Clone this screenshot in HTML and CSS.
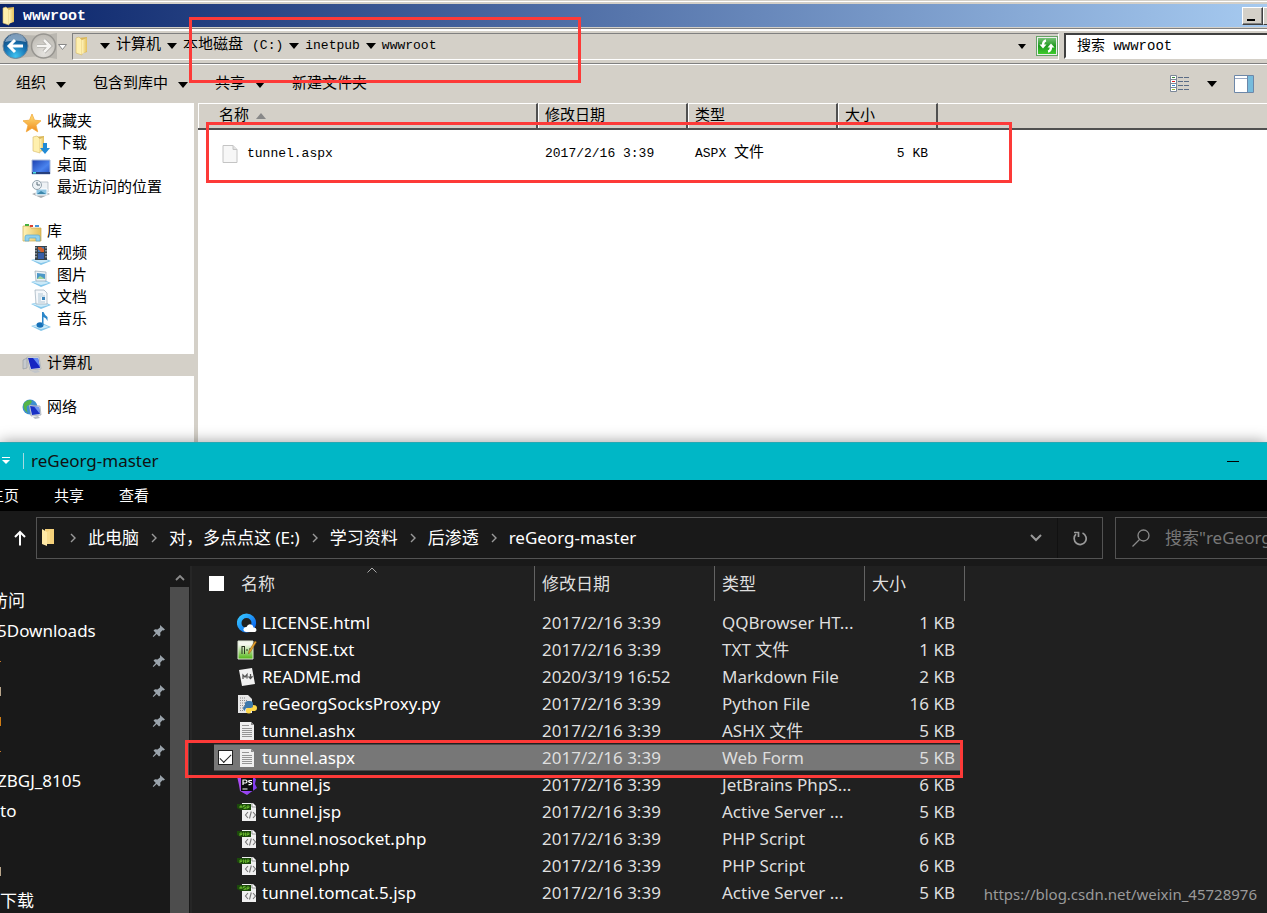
FILE: index.html
```html
<!DOCTYPE html>
<html lang="zh-CN">
<head>
<meta charset="utf-8">
<title>reGeorg-master</title>
<link rel="stylesheet" href="styles.css">
</head>
<body>
<svg class="defs" aria-hidden="true">
  <defs>
    <linearGradient id="gFold" x1="0" x2="1"><stop offset="0" stop-color="#fff3b8"/><stop offset="1" stop-color="#e3bf5a"/></linearGradient>
    <linearGradient id="gBlue" x1="0" y1="0" x2="1" y2="1"><stop offset="0" stop-color="#1b3fae"/><stop offset=".6" stop-color="#4a83ee"/><stop offset="1" stop-color="#2450c0"/></linearGradient>
    <linearGradient id="gStar" x1="0" y1="0" x2="0" y2="1"><stop offset="0" stop-color="#ffe27a"/><stop offset="1" stop-color="#f08a1d"/></linearGradient>
    <linearGradient id="gGreen" x1="0" y1="0" x2="0" y2="1"><stop offset="0" stop-color="#7cc47c"/><stop offset=".5" stop-color="#1f9a1f"/><stop offset="1" stop-color="#3fce2d"/></linearGradient>
    <linearGradient id="gTxt" x1="0" y1="0" x2="0" y2="1"><stop offset=".2" stop-color="#f4f7ee"/><stop offset="1" stop-color="#4fb511"/></linearGradient>
    <linearGradient id="gQQ" x1="0" y1="0" x2="1" y2="1"><stop offset="0" stop-color="#35c4ff"/><stop offset="1" stop-color="#0a62f0"/></linearGradient>
    <linearGradient id="gPS" x1="0" x2="1"><stop offset="0" stop-color="#b14cf5"/><stop offset="1" stop-color="#7b3bf0"/></linearGradient>
    <radialGradient id="gBack" cx=".5" cy=".9" r=".9"><stop offset="0" stop-color="#3fc3f0"/><stop offset=".5" stop-color="#1874b4"/><stop offset="1" stop-color="#123c6c"/></radialGradient>
    <radialGradient id="gFwd" cx=".5" cy=".8" r=".8"><stop offset="0" stop-color="#e4e2de"/><stop offset="1" stop-color="#bcb9b2"/></radialGradient>
    <symbol id="folder" viewBox="0 0 20 20"><path d="M5 2l9-1v15l-7 2z" fill="#d9b65a"/><path d="M3 2l3-1 3 3v15l-6-2z" fill="#fff0ae" stroke="#d5b765" stroke-width=".6"/><path d="M9 4l5-2v13l-5 3z" fill="url(#gFold)"/></symbol>
    <symbol id="down" viewBox="0 0 20 20"><path d="M3 2l10-1v15l-8 1z" fill="#d9b65a"/><path d="M2 2l4-1 3 3v14l-7-2z" fill="#fff0ae" stroke="#d5b765" stroke-width=".6"/><path d="M9 4l4-2v12l-4 2z" fill="url(#gFold)"/><path d="M12 8h4v5h3l-5 6-5-6h3z" fill="#218bd6"/></symbol>
    <symbol id="star" viewBox="0 0 20 20"><path d="M10 1l2.500 6.200 6.500.6-5 4.400 1.700 6.600L10 15.200 4.300 18.800 6 12.200 1 7.800l6.500-.6z" fill="url(#gStar)" stroke="#f2aa3c" stroke-width=".8"/></symbol>
    <symbol id="desk" viewBox="0 0 20 20"><path d="M1 3h18v14H1z" fill="url(#gBlue)" stroke="#a9b9d8"/><path d="M1 15h18v2H1z" fill="#27407c"/><path d="M2 15h3v1.500H2z" fill="#4fe0e0"/></symbol>
    <symbol id="recent" viewBox="0 0 20 20"><path d="M1 15l10-4 8 4-9 4z" fill="#a8adb2"/><path d="M8 3h9v10H8z" fill="#eef2f5" stroke="#a6b2bb" stroke-width=".7"/><path d="M5 10h11v6H5z" fill="#8dc5e4" stroke="#fff"/><path d="M6 15l4-3 5 3z" fill="#3b86aa"/><circle cx="6" cy="6" r="4.500" fill="#edf2f5" stroke="#94a3ad"/><path d="M6 3v3h3" fill="none" stroke="#5a6e7a"/></symbol>
    <symbol id="lib" viewBox="0 0 20 20"><path d="M1 3h7l1 2h10v13H1z" fill="url(#gFold)" stroke="#c9a94e" stroke-width=".7"/><path d="M3 1h4v2H3z" fill="#45b03f"/><path d="M8 2h3v2H8z" fill="#dd4233"/><path d="M13 2h4v2h-4z" fill="#4495dc"/><path d="M3 18v-4q0-2 2-2h11q2 0 2 2v4h-4v-3H7v3z" fill="#8fd1ee" stroke="#5aa8cd" stroke-width=".7"/></symbol>
    <symbol id="plate" viewBox="0 0 20 20"><path d="M0 15l11-3 9 4-10 4z" fill="#84c6ea"/><path d="M1 15l10-2 7 3-8 2z" fill="#cceaf8"/></symbol>
    <symbol id="video" viewBox="0 0 20 20"><use href="#plate"/><path d="M4 1h12v14H4z" fill="#37424a"/><path d="M7 2h6v5H7z" fill="#d2602b"/><path d="M7 8h6v6H7z" fill="#365ea8"/><path d="M7 4l3 3H7zM10 2h3v2z" fill="#3c7cc0"/><path d="M5 2v12M15 2v12" stroke="#e2e6e8" stroke-dasharray="1.500 1.500"/></symbol>
    <symbol id="pic" viewBox="0 0 20 20"><use href="#plate"/><path d="M4 4l11 1v9H5z" fill="#edf3f7" stroke="#95a8b5" stroke-width=".7"/><path d="M6 6l8 1v5H6z" fill="#4c98c8"/><path d="M6 12l3-3 5 3z" fill="#a1d39a"/></symbol>
    <symbol id="doc" viewBox="0 0 20 20"><use href="#plate"/><path d="M4 1h9l3 3v11H5z" fill="#f5f8fb" stroke="#9bacb9" stroke-width=".7"/><path d="M7 5h5M7 7h7M7 9h3M7 11h3M7 13h7" stroke="#94b1c6" stroke-width=".7"/><path d="M11 8h3v3h-3z" fill="#3f87bd"/></symbol>
    <symbol id="music" viewBox="0 0 20 20"><use href="#plate"/><ellipse cx="9" cy="14" rx="3.500" ry="2.800" fill="#1670b8"/><path d="M11 1h1.500q1 3 4 5v4q-1-3-4-4v8H11z" fill="#2b86c9"/></symbol>
    <symbol id="pc" viewBox="0 0 20 20"><path d="M1 5l4-2v10l-4 1z" fill="#c5c9cd" stroke="#8d949a" stroke-width=".6"/><path d="M5 2h12l2 12-11 1z" fill="#dfe3e8" stroke="#9ca4ad" stroke-width=".6"/><path d="M6 3h10l2 10-9 1z" fill="#1626c2"/><path d="M11 3h5l2 9z" fill="#668cf2"/><path d="M9 16l7-1 2 2-5 1z" fill="#c1c5ca"/></symbol>
    <symbol id="net" viewBox="0 0 20 20"><circle cx="8" cy="8" r="7.500" fill="#3d8fd0"/><path d="M2 4q5-5 8-2-1 4-5 5-1 4 1 7Q0 10 2 4z" fill="#55b548"/><path d="M7 6l11 1 1 9-10 1z" fill="#e1e5ea" stroke="#8c96a4" stroke-width=".6"/><path d="M8 7l9 1 1 7-8 1z" fill="#1a31c5"/><path d="M12 7.500l5 .5 1 7z" fill="#6f94f0"/><path d="M11 18l5-1 2 2-5 1z" fill="#b8bdc4"/></symbol>
    <symbol id="page" viewBox="0 0 20 20"><path d="M3 1.500h10l4 4v13H3z" fill="#f7f7f7" stroke="#c4c4c4"/><path d="M13 1.500v4h4" fill="#e3e3e3" stroke="#c4c4c4"/></symbol>
    <symbol id="lines" viewBox="0 0 20 20"><path d="M3 1h11l3 3v15H3z" fill="#efefef"/><path d="M14 1v3h3z" fill="#8d8d8d"/><path d="M5 4.500h7M5 7.500h10M5 9.500h10M5 11.500h10M5 13.500h10M5 15.500h10" stroke="#959595"/></symbol>
    <symbol id="qq" viewBox="0 0 20 20"><circle cx="9.500" cy="10" r="7.300" fill="none" stroke="url(#gQQ)" stroke-width="4.600"/><path d="M9 19q-3-.5-2.500-3 .6-2.300 3-2 1.500-3.500 4.500-2.500 2.300.5 2.500 3 3 .3 3 2.500T17 19z" fill="#fff"/></symbol>
    <symbol id="txt" viewBox="0 0 20 20"><path d="M1 1h15v18H1z" fill="url(#gTxt)" stroke="#dce5d3"/><path d="M5 6v8M7.500 6v8M5 6.500h2M9 10h2M12 9h2" stroke="#27331f"/><path d="M18 1l1.500 1-6 10-2 2 .4-3z" fill="#e7a32c" stroke="#805013" stroke-width=".5"/></symbol>
    <symbol id="md" viewBox="0 0 20 20"><path d="M2 3l13-2 3 16-13 2z" fill="#f1f1f1"/><path d="M6 12V8l2 2 2-2.500v4M13.500 7v4M11.500 9.500l2 2 2-2.300" fill="none" stroke="#555" stroke-width="1.300"/></symbol>
    <symbol id="py" viewBox="0 0 20 20"><path d="M1 1h10l4 4v14H1z" fill="#e7e7e7"/><path d="M3 4h6M3 6.500h8M3 9h6M3 11.500h5M3 14h4M3 16.500h4" stroke="#8b8b8b" stroke-dasharray="1 1"/><path d="M8 12V9.500Q8 7 11 7h2q3 0 3 3v2q0 2-2 2h-4q-2 0-2 3-2-1-2-3t2-2z" fill="#3d78aa"/><path d="M16 11q4 0 4 3t-3 3h-3v1q0 1.500-2 1.500T9 18v-2q0-2 2-2h3q2 0 2-3z" fill="#ffd84a"/></symbol>
    <symbol id="ps" viewBox="0 0 20 20"><path d="M0 1l5 1 9-2 5 4-1 5 2 4-6 4-4 3-7-4-1-6z" fill="url(#gPS)"/><path d="M4 3h12v13H4z" fill="#0b0b0e"/><path d="M6 10V5h2.500q1.500 0 1.500 1.500T8.500 8H6M15 5.500h-2q-1.500 0-1.300 1 .2.800 1.600 1 1.500.2 1.300 1.200-.2.900-1.600.9h-1.500M5.500 14h5" fill="none" stroke="#fff" stroke-width="1.200"/></symbol>
    <symbol id="code" viewBox="0 0 20 20"><path d="M5 1h11l3 3v15H5z" fill="#f0f0f0"/><path d="M15 1v4h4" fill="#fff" stroke="#999"/><path d="M0 2h14v6H4L0 6z" fill="#1c4a0b"/><path d="M11 10l-2.500 3 2.500 3M16 10l2.500 3-2.500 3M14.300 9.500l-1.800 7" fill="none" stroke="#777" stroke-width="1.100"/></symbol>
    <symbol id="asp" viewBox="0 0 20 20"><use href="#code"/><path d="M3 6V4h2v2M3 5h2M8.500 3.500h-2V5h2v1.500h-2M10 7V4h2v1.500h-2" fill="none" stroke="#7bd435" stroke-width=".7"/></symbol>
    <symbol id="php" viewBox="0 0 20 20"><use href="#code"/><path d="M3 7V4h2v1.500H3M6.500 3.500V7M8.500 3.500V7M6.500 5h2M10 7V4h2v1.500h-2" fill="none" stroke="#7bd435" stroke-width=".7"/></symbol>
    <symbol id="tri" viewBox="0 0 10 6"><path d="M0 0h10L5 6z" fill="currentColor"/></symbol>
    <symbol id="pin" viewBox="0 0 14 14"><path d="M8 1l5 4.500-1.500 1-1-.3-2.300 2.600.3 2.500-1.500 1.200-2.300-2.500L1.500 13l-.8-.7L3.800 9 1.500 6.500 3 5.300l2.500.3L8 3.500z" fill="#9ba4ac"/></symbol>
    <symbol id="chev" viewBox="0 0 6 10"><path d="M1 1l4 4-4 4" fill="none" stroke="#9a9a9a" stroke-width="1.400"/></symbol>
  </defs>
</svg>

<section class="classic">
  <header class="c-title">
    <svg class="ico"><use href="#folder"/></svg>
    <h1>wwwroot</h1>
    <button class="c-win" aria-label="最小化"></button><button class="c-win c-max" aria-label="最大化"></button>
  </header>
  <nav class="c-nav">
    <svg class="travel" viewBox="0 0 72 30">
      <path d="M15 2q20 5 42 0v26q-21-5-42 0z" fill="#bab7b0"/>
      <circle cx="15.500" cy="15" r="12.500" fill="url(#gBack)" stroke="#74889a"/>
      <path d="M5 11q3-8 11-8 8 0 10 8-11-3-21 0z" fill="#a9c0d5" opacity=".7"/>
      <path d="M9 15h14M15 9l-6 6 6 6" fill="none" stroke="#fff" stroke-width="3"/>
      <circle cx="43.500" cy="15" r="12" fill="url(#gFwd)" stroke="#979590" stroke-width="1.500"/>
      <path d="M37 15h13M44 9l6 6-6 6" fill="none" stroke="#aaa8a3" stroke-width="4"/>
      <path d="M37 15h13M44 9l6 6-6 6" fill="none" stroke="#f6f5f3" stroke-width="2.500"/>
      <path d="M58.500 13.500h8l-4 5z" fill="#fff" stroke="#888"/>
    </svg>
    <div class="c-addr">
      <svg class="ico"><use href="#folder"/></svg>
      <div class="c-path">
        <svg class="tri"><use href="#tri"/></svg><a href="#">计算机</a>
        <svg class="tri"><use href="#tri"/></svg><a href="#">本地磁盘 <span class="en">(C:)</span></a>
        <svg class="tri"><use href="#tri"/></svg><a href="#" class="en">inetpub</a>
        <svg class="tri"><use href="#tri"/></svg><a href="#" class="en">wwwroot</a>
      </div>
      <svg class="tri small"><use href="#tri"/></svg>
      <button class="c-go" aria-label="刷新"><svg viewBox="0 0 20 18"><rect x=".5" y=".5" width="19" height="17" fill="url(#gGreen)" stroke="#eee"/><path d="M9 3.500q-3 .5-3 5" fill="none" stroke="#fff" stroke-width="2.400"/><path d="M2.500 7.500h7L6 11.500z" fill="#fff"/><path d="M11 14.500q3-.5 3-5" fill="none" stroke="#fff" stroke-width="2.400"/><path d="M10.500 10.500h7L14 6.500z" fill="#fff"/></svg></button>
    </div>
    <input class="c-search" type="text" aria-label="搜索" placeholder="搜索 wwwroot">
  </nav>
  <div class="c-tools">
    <button>组织<svg class="tri"><use href="#tri"/></svg></button>
    <button>包含到库中<svg class="tri"><use href="#tri"/></svg></button>
    <button>共享<svg class="tri"><use href="#tri"/></svg></button>
    <button>新建文件夹</button>
    <div class="c-view">
      <svg width="20" height="18" viewBox="0 0 20 18"><path d="M.5.500h6v16h-6zM.5 4.500h6M.5 8.500h6M.5 12.500h6" fill="#fff" stroke="#7a8798"/><path d="M2 2.500h3" stroke="#3a8a3a"/><path d="M2 6.500h3" stroke="#d22"/><path d="M2 10.500h3" stroke="#38c"/><path d="M2 14.500h3" stroke="#9b3"/><path d="M8 2.500h12M8 6.500h12M8 10.500h12M8 14.500h12" stroke="#5b6c86" stroke-dasharray="5 1"/></svg>
      <svg class="tri"><use href="#tri"/></svg>
      <svg width="20" height="18" viewBox="0 0 20 18"><path d="M.5.500h19v17H.5z" fill="#fff" stroke="#6d87a8"/><path d="M1 3.500h13" stroke="#9aa9c4"/><path d="M14 1h5v16h-5z" fill="#76bbdc"/><path d="M13.500 1v16" stroke="#6d87a8"/></svg>
    </div>
  </div>
  <div class="c-body">
    <ul class="c-tree">
      <li><svg class="ico"><use href="#star"/></svg>收藏夹</li>
      <li class="sub"><svg class="ico"><use href="#down"/></svg>下载</li>
      <li class="sub"><svg class="ico"><use href="#desk"/></svg>桌面</li>
      <li class="sub"><svg class="ico"><use href="#recent"/></svg>最近访问的位置</li>
      <li class="gap"><svg class="ico"><use href="#lib"/></svg>库</li>
      <li class="sub"><svg class="ico"><use href="#video"/></svg>视频</li>
      <li class="sub"><svg class="ico"><use href="#pic"/></svg>图片</li>
      <li class="sub"><svg class="ico"><use href="#doc"/></svg>文档</li>
      <li class="sub"><svg class="ico"><use href="#music"/></svg>音乐</li>
      <li class="gap on"><svg class="ico"><use href="#pc"/></svg>计算机</li>
      <li class="gap"><svg class="ico"><use href="#net"/></svg>网络</li>
    </ul>
    <div class="c-list">
      <table>
        <colgroup><col class="w-name"><col class="w-mid"><col class="w-mid"><col class="w-size"><col></colgroup>
        <thead><tr><th>名称<svg class="sort" viewBox="0 0 10 6"><path d="M0 6h10L5 0z" fill="#888"/></svg></th><th>修改日期</th><th>类型</th><th>大小</th><th></th></tr></thead>
        <tbody><tr><td><span class="file en"><svg class="ico"><use href="#page"/></svg>tunnel.aspx</span></td><td class="en">2017/2/16 3:39</td><td><span class="en">ASPX </span>文件</td><td class="num en">5 KB</td><td></td></tr></tbody>
      </table>
    </div>
  </div>
  <div class="mark mark-path"></div>
  <div class="mark mark-row"></div>
</section>

<section class="dark">
  <header class="d-title">
    <svg width="8" height="8" viewBox="0 0 8 8"><path d="M0 .500h8" stroke="#fff"/><path d="M0 3h8L4 7z" fill="#fff"/></svg>
    <i class="d-sep"></i>
    <h2>reGeorg-master</h2>
    <button class="d-min" aria-label="最小化"></button>
  </header>
  <div class="d-tabs"><button>主页</button><button>共享</button><button>查看</button></div>
  <nav class="d-nav">
    <button class="d-up" aria-label="上移"><svg width="12" height="16" viewBox="0 0 12 16"><path d="M6 15.500V2M1 7l5-5 5 5" fill="none" stroke="#fff" stroke-width="2"/></svg></button>
    <div class="d-addr">
      <svg class="d-fold" viewBox="0 0 12 18"><path d="M3 0h9v15H3z" fill="#f5d17a"/><path d="M0 0l5 3v14l-5-2z" fill="#ffe9a6"/><path d="M5 3l3-2v14H5z" fill="#f8dc8e"/></svg>
      <svg class="chev"><use href="#chev"/></svg><a href="#">此电脑</a>
      <svg class="chev"><use href="#chev"/></svg><a href="#">对，多点点这 (E:)</a>
      <svg class="chev"><use href="#chev"/></svg><a href="#">学习资料</a>
      <svg class="chev"><use href="#chev"/></svg><a href="#">后渗透</a>
      <svg class="chev"><use href="#chev"/></svg><a href="#">reGeorg-master</a>
      <button class="d-drop" aria-label="历史"><svg width="12" height="8" viewBox="0 0 12 8"><path d="M1 1l5 5 5-5" fill="none" stroke="#9a9a9a" stroke-width="2"/></svg></button>
      <button class="d-ref" aria-label="刷新"><svg width="14" height="15" viewBox="0 0 14 15"><path d="M9.500 2A6 6 0 1 1 3 3.200M1 1.500h4.500V6" fill="none" stroke="#9a9a9a" stroke-width="1.700"/></svg></button>
    </div>
    <label class="d-search"><svg width="18" height="18" viewBox="0 0 18 18"><circle cx="11.500" cy="6.500" r="5.500" fill="none" stroke="#8a8a8a" stroke-width="1.300"/><path d="M7.500 10.500L.5 17.500" stroke="#8a8a8a" stroke-width="1.300"/></svg><input type="text" aria-label="搜索" placeholder="搜索&quot;reGeorg-master&quot;"></label>
  </nav>
  <div class="d-body">
    <ul class="d-tree">
      <li><span class="clip">访问</span></li>
      <li><span class="nip">5Downloads</span><svg class="pin"><use href="#pin"/></svg></li>
      <li><i class="dot"></i><svg class="pin"><use href="#pin"/></svg></li>
      <li><i class="dot tall"></i><svg class="pin"><use href="#pin"/></svg></li>
      <li><i class="dot tall amber"></i><svg class="pin"><use href="#pin"/></svg></li>
      <li><i class="dot"></i><svg class="pin"><use href="#pin"/></svg></li>
      <li><span class="nip">ZBGJ_8105</span><svg class="pin"><use href="#pin"/></svg></li>
      <li>to</li>
      <li></li>
      <li><i class="dot tall"></i></li>
      <li>下载</li>
    </ul>
    <div class="d-scroll"><svg width="10" height="7" viewBox="0 0 10 7"><path d="M1 6l4-4 4 4" fill="none" stroke="#8c8c8c" stroke-width="1.800"/></svg><i></i></div>
    <div class="d-list">
      <svg class="d-asc" viewBox="0 0 10 6"><path d="M.5 5.500L5 1l4.500 4.500" fill="none" stroke="#aaa"/></svg>
      <table>
        <colgroup><col class="v-name"><col class="v-date"><col class="v-type"><col class="v-size"><col></colgroup>
        <thead><tr><th><span class="hd"><input type="checkbox" aria-label="全选">名称</span></th><th>修改日期</th><th>类型</th><th>大小</th><td></td></tr></thead>
        <tbody>
          <tr><td><span class="file"><svg class="ico"><use href="#qq"/></svg>LICENSE.html</span></td><td>2017/2/16 3:39</td><td>QQBrowser HT...</td><td class="num">1 KB</td></tr>
          <tr><td><span class="file"><svg class="ico"><use href="#txt"/></svg>LICENSE.txt</span></td><td>2017/2/16 3:39</td><td>TXT 文件</td><td class="num">1 KB</td></tr>
          <tr><td><span class="file"><svg class="ico"><use href="#md"/></svg>README.md</span></td><td>2020/3/19 16:52</td><td>Markdown File</td><td class="num">2 KB</td></tr>
          <tr><td><span class="file"><svg class="ico"><use href="#py"/></svg>reGeorgSocksProxy.py</span></td><td>2017/2/16 3:39</td><td>Python File</td><td class="num">16 KB</td></tr>
          <tr><td><span class="file"><svg class="ico"><use href="#lines"/></svg>tunnel.ashx</span></td><td>2017/2/16 3:39</td><td>ASHX 文件</td><td class="num">5 KB</td></tr>
          <tr class="sel"><td><span class="file"><input type="checkbox" aria-label="tunnel.aspx" checked><svg class="ico"><use href="#lines"/></svg>tunnel.aspx</span></td><td>2017/2/16 3:39</td><td>Web Form</td><td class="num">5 KB</td></tr>
          <tr><td><span class="file"><svg class="ico"><use href="#ps"/></svg>tunnel.js</span></td><td>2017/2/16 3:39</td><td>JetBrains PhpS...</td><td class="num">6 KB</td></tr>
          <tr><td><span class="file"><svg class="ico"><use href="#asp"/></svg>tunnel.jsp</span></td><td>2017/2/16 3:39</td><td>Active Server ...</td><td class="num">5 KB</td></tr>
          <tr><td><span class="file"><svg class="ico"><use href="#php"/></svg>tunnel.nosocket.php</span></td><td>2017/2/16 3:39</td><td>PHP Script</td><td class="num">6 KB</td></tr>
          <tr><td><span class="file"><svg class="ico"><use href="#php"/></svg>tunnel.php</span></td><td>2017/2/16 3:39</td><td>PHP Script</td><td class="num">6 KB</td></tr>
          <tr><td><span class="file"><svg class="ico"><use href="#asp"/></svg>tunnel.tomcat.5.jsp</span></td><td>2017/2/16 3:39</td><td>Active Server ...</td><td class="num">5 KB</td></tr>
        </tbody>
      </table>
    </div>
  </div>
  <div class="mark mark-sel"></div>
  <div class="credit">https://blog.csdn.net/weixin_45728976</div>
</section>
</body>
</html>
```
FILE: styles.css
```css
* { box-sizing: border-box; }
body { margin: 0; height: 100vh; display: flex; flex-direction: column; overflow: hidden; }
button { border: 0; padding: 0; background: none; font: inherit; color: inherit; }
a { color: inherit; text-decoration: none; }
ul { list-style: none; margin: 0; padding: 0; }
h1, h2 { margin: 0; font-weight: normal; }
svg { display: block; flex: none; }
table { border-collapse: separate; border-spacing: 0; table-layout: fixed; width: 100%; }
th { font-weight: normal; text-align: left; }
th, td { padding: 0; white-space: nowrap; }
.defs { position: absolute; width: 0; height: 0; }
.ico { width: 20px; height: 20px; }
.file { display: flex; align-items: center; }
.num { text-align: right; }
.mark { position: absolute; border: 3px solid #fd3a38; pointer-events: none; }

/* classic window */
.classic { position: relative; flex: none; background: #d4d0c8; color: #000; border-top: 1px solid #d4d0c8; box-shadow: inset 0 1px #fff; padding-top: 3px; font: 15px/22px "Liberation Mono", "Noto Sans CJK SC", sans-serif; }
.en { font-size: 13px; }
.c-title { height: 23px; display: flex; align-items: center; background: linear-gradient(90deg, #0a246a, #a6caf0); }
.c-title h1 { flex: 1; margin-left: 3px; padding-top: 2px; color: #fff; font: bold 15px/22px "Liberation Mono", monospace; }
.c-win { width: 21px; height: 18px; background: #d4d0c8; border: 1px solid; border-color: #fff #404040 #404040 #fff; box-shadow: inset -1px -1px #808080; display: flex; align-items: flex-end; padding: 0 0 3px 4px; }
.c-win::after { content: ""; width: 8px; height: 2px; background: #000; }
.c-max { width: 4px; padding: 0; border-right: 0; box-shadow: none; }
.c-max::after { content: none; }
.c-nav { display: flex; align-items: center; height: 36px; border-top: 1px solid #808080; border-bottom: 1px solid #808080; box-shadow: inset 0 2px #fff; margin-top: 1px; }
.travel { width: 72px; height: 30px; }
.c-addr { flex: 1; height: 27px; display: flex; align-items: center; border: 1px solid; border-color: #808080 #fff #fff #808080; }
.c-path { flex: 1; display: flex; align-items: center; gap: 6px; margin-left: 7px; }
.c-path a { line-height: 22px; }
.tri { width: 10px; height: 6px; }
.small { width: 8px; height: 5px; margin-right: 10px; }
.c-go svg { width: 20px; height: 18px; }
.c-go { border: 1px solid #66a266; }
.c-search { width: 203px; height: 26px; margin: 0 0 0 5px; padding: 0 11px; background: #fff; border: 2px solid; border-color: #404040 transparent #fff #404040; border-right: 0; border-radius: 0; font: 14px/20px "Liberation Mono", "Noto Sans CJK SC", sans-serif; outline: 0; }
.c-search::placeholder { color: #000; }
.c-tools { display: flex; align-items: center; height: 39px; padding: 0 13px 1px 16px; gap: 26px; border-top: 1px solid #fff; }
.c-tools button { display: flex; align-items: center; gap: 10px; padding-top: 2px; }
.c-tools button + button { margin-left: 1px; }
.c-view { margin-left: auto; display: flex; align-items: center; gap: 17px; }
.c-body { display: flex; }
.c-tree { flex: none; width: 198px; padding: 9px 0 22px; background: #fff; border-right: 4px solid #d4d0c8; line-height: 20px; }
.c-tree li { display: flex; align-items: center; gap: 5px; height: 22px; padding-left: 22px; }
.c-tree .sub { padding-left: 31px; gap: 6px; }
.c-tree .gap { margin-top: 22px; }
.c-tree .on { background: #d4d0c8; }
.c-list { flex: 1; background: #fff; }
.w-name { width: 340px; }
.w-mid { width: 150px; }
.w-size { width: 100px; }
.c-list th { height: 27px; padding: 2px 0 0 7px; background: #d4d0c8; border-top: 1px solid #fff; border-bottom: 2px solid #505050; border-right: 2px solid #505050; box-shadow: inset 1px 0 #fff; }
.c-list th:first-child { padding-left: 21px; }
.c-list th:last-child { border-right: 0; box-shadow: none; }
.sort { display: inline-block; width: 10px; height: 6px; margin-left: 7px; vertical-align: 1px; }
.c-list td { padding: 13px 10px 0 7px; }
.c-list td:first-child { padding: 12px 0 0 22px; }
.c-list .file { gap: 7px; }
.mark-path { left: 189px; top: 16px; width: 392px; height: 66px; }
.mark-row { left: 206px; top: 121px; width: 806px; height: 61px; }

/* dark window */
.dark { position: relative; flex: 1; min-height: 0; display: flex; flex-direction: column; background: #191919; color: #fff; box-shadow: 0 0 14px rgba(0, 0, 0, .4); font: 17px/26px "Noto Sans", "Noto Sans CJK SC", sans-serif; }
.d-title { flex: none; height: 38px; display: flex; align-items: center; background: #00b7c6; border-top: 1px solid #25a9b5; color: #111; padding: 0 0 1px 2px; }
.d-sep { width: 1px; height: 16px; margin: 0 7px 0 13px; background: #a5dbe0; }
.d-title h2 { flex: 1; font-size: 17px; }
.d-min { width: 12px; height: 1px; margin-right: 28px; background: #000; }
.d-tabs { flex: none; height: 31px; display: flex; align-items: center; gap: 35px; margin-left: -11px; padding-bottom: 2px; background: #000; font-size: 15px; }
.d-nav { flex: none; height: 55px; display: flex; align-items: center; padding-bottom: 1px; }
.d-up { width: 36px; padding-left: 14px; }
.d-addr { flex: 1; height: 42px; display: flex; align-items: center; border: 1px solid #535353; padding-left: 5px; }
.d-fold { width: 12px; height: 18px; }
.chev { width: 6px; height: 10px; margin: 0 12px; }
.d-addr .d-fold + .chev { margin-left: 16px; }
.d-drop { margin-left: auto; width: 44px; height: 40px; display: grid; place-items: center; border-right: 1px solid #111; }
.d-ref { width: 44px; height: 40px; display: grid; place-items: center; }
.d-search { width: 152px; height: 42px; margin-left: 12px; display: flex; align-items: center; gap: 15px; padding-left: 16px; border: 1px solid #535353; border-right: 0; overflow: hidden; }
.d-search input { flex: 1; min-width: 0; background: none; border: 0; padding: 0; outline: 0; color: #fff; font: inherit; }
.d-search input::placeholder { color: #777; opacity: 1; }
.d-body { flex: 1; min-height: 0; display: flex; overflow: hidden; }
.d-tree { width: 170px; padding-top: 20px; }
.d-tree li { height: 30px; display: flex; align-items: center; padding-right: 4px; }
.clip { margin-left: -9px; }
.nip { margin-left: -3px; }
.pin { width: 14px; height: 14px; margin-left: auto; }
.dot { width: 1px; height: 1px; background: #c87a2a; }
.tall { height: 9px; background: #b9a58a; }
.amber { background: #d07c14; }
.d-scroll { width: 19px; display: flex; flex-direction: column; align-items: center; padding-top: 8px; gap: 6px; }
.d-scroll i { flex: 1; width: 19px; background: #4d4d4d; }
.d-list { position: relative; flex: 1; margin-left: 1px; background: #202020; border-left: 2px solid #262626; color: #dedede; }
.d-asc { position: absolute; left: 175px; top: 1px; width: 10px; height: 6px; }
.v-name { width: 343px; }
.v-date { width: 180px; }
.v-type { width: 150px; }
.v-size { width: 100px; }
.d-list th { height: 35px; padding-left: 7px; border-right: 1px solid #636363; }
.d-list th:first-child { padding-left: 17px; }
.hd { display: flex; align-items: center; gap: 17px; }
.d-list tbody::before { content: ""; display: block; height: 8px; }
.d-list tbody td { height: 27px; padding-left: 7px; }
.d-list tbody td:first-child { padding-left: 23px; border-left: 22px solid transparent; color: #fff; }
.d-list .file .ico { margin-right: 5px; }
.d-list tbody .num { padding: 0 7px 0 0; border-right: 3px solid transparent; }
.sel td { background: #777; background-clip: padding-box; box-shadow: inset 0 1px #4b4b4b, inset 0 -1px #4b4b4b; }
.d-list .sel td:first-child { padding-left: 4px; }
.d-list input { appearance: none; flex: none; width: 15px; height: 15px; margin: 0; background: #fff; border: 1px solid #fff; }
.d-list .sel input { margin-right: 4px; border-color: #222; display: grid; place-items: center; }
.sel input::after { content: ""; width: 10px; height: 5px; border: solid #222; border-width: 0 0 1px 1px; transform: translateY(-1px) rotate(-45deg); }
.mark-sel { left: 185px; top: 298px; width: 778px; height: 38px; }
.credit { position: absolute; right: 10px; bottom: 7px; color: #9a9a9a; font: 15px/24px "Noto Sans", sans-serif; }
```
